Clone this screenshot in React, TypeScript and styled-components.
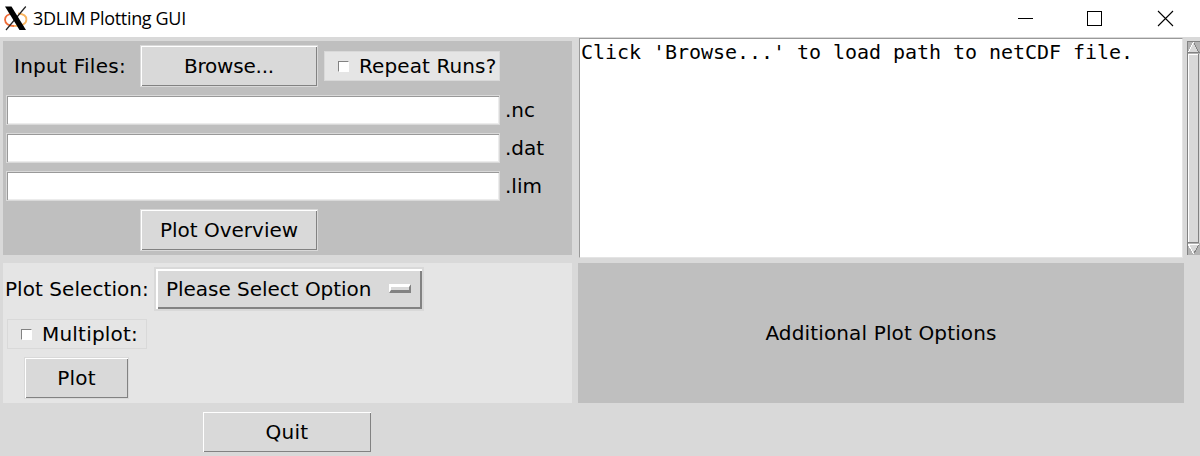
import React from "react";
import styled, { createGlobalStyle } from "styled-components";

const FACE = "#d9d9d9";
const DARK = "#828282";
const PANEL = "#bfbfbf";
const LIGHT = "#e5e5e5";

const GlobalStyle = createGlobalStyle`
  * { box-sizing: border-box; }
  body {
    margin: 0;
    background: ${FACE};
    color: #000;
    font: 20px/24px "DejaVu Sans", sans-serif;
    overflow: hidden;
  }
`;

const Window = styled.div`
  width: 1200px;
  height: 456px;
  display: flex;
  flex-direction: column;
  background: ${FACE};
  white-space: nowrap;
`;

const TitleBar = styled.header`
  height: 37px;
  flex: none;
  display: flex;
  align-items: center;
  background: #fff;
  padding-left: 4px;
`;

const Title = styled.h1`
  margin: 0 auto 0 5px;
  padding-bottom: 1px;
  font: 400 18px/24px "Open Sans", "Noto Sans", sans-serif;
  letter-spacing: -0.34px;
`;

const Controls = styled.div`
  display: flex;
  svg { display: block; }
`;

const Content = styled.main`
  flex: 1;
  display: flex;
`;

const LeftColumn = styled.div`
  width: 569px;
  margin: 4px 6px 0 3px;
  display: flex;
  flex-direction: column;
`;

const RightColumn = styled.div`
  width: 606px;
  padding-top: 1px;
`;

const InputPanel = styled.section`
  height: 214px;
  background: ${PANEL};
  padding: 4px 3px;
  display: flex;
  flex-direction: column;
`;

const Row = styled.div<{ $indent?: number; $top?: number }>`
  display: flex;
  align-items: center;
  padding-left: ${(p) => p.$indent ?? 0}px;
  margin-top: ${(p) => p.$top ?? 0}px;
`;

const Label = styled.span<{ $width?: number; $spacing?: number }>`
  width: ${(p) => (p.$width ? `${p.$width}px` : "auto")};
  letter-spacing: ${(p) => p.$spacing ?? 0}px;
`;

const Button = styled.button<{ $width: number; $spacing?: number }>`
  width: ${(p) => p.$width}px;
  height: 42px;
  flex: none;
  padding: 0;
  font: inherit;
  letter-spacing: ${(p) => p.$spacing ?? 0}px;
  color: inherit;
  background: ${FACE};
  border: 1px solid ${FACE};
  box-shadow: inset 1px 1px 0 #fff, inset -1px -1px 0 ${DARK};
`;

const CheckLabel = styled.label<{ $width: number; $spacing: number }>`
  width: ${(p) => p.$width}px;
  height: 30px;
  display: flex;
  align-items: center;
  gap: 10px;
  padding-left: 13px;
  letter-spacing: ${(p) => p.$spacing}px;
  background: ${LIGHT};
  border: 1px solid ${FACE};
`;

const CheckBox = styled.input.attrs({ type: "checkbox" })`
  appearance: none;
  width: 11px;
  height: 11px;
  margin: 0;
  background: #fff;
  border: 1px solid;
  border-color: ${DARK} #fff #fff ${DARK};
`;

const FileRow = styled.div`
  display: flex;
  align-items: center;
  gap: 5px;
  margin-top: 8px;
`;

const Entry = styled.input`
  width: 494px;
  height: 30px;
  padding: 0 2px;
  font: inherit;
  background: #fff;
  border: 1px solid ${FACE};
  outline: none;
  box-shadow: inset 1px 1px 0 #999, inset -1px -1px 0 #ececec;
`;

const PlotPanel = styled.section`
  height: 140px;
  margin-top: 8px;
  padding: 4px 0 0 2px;
  background: ${LIGHT};
`;

const OptionMenu = styled.button`
  width: 270px;
  height: 44px;
  display: flex;
  align-items: center;
  justify-content: space-between;
  padding: 0 11px 0 10px;
  font: inherit;
  letter-spacing: -0.03px;
  color: inherit;
  background: ${FACE};
  border: 2px solid ${FACE};
  box-shadow: inset 2px 2px 0 #fff, inset -2px -2px 0 ${DARK};
`;

const Indicator = styled.span`
  width: 22px;
  height: 9px;
  margin-bottom: 1px;
  background: ${FACE};
  border: 3px solid;
  border-width: 3px 2px 3px 2px;
  border-color: #fff ${DARK} ${DARK} #fff;
`;

const Output = styled.div`
  width: 604px;
  height: 220px;
  margin-left: 1px;
  padding: 1px 1px;
  background: #fff;
  border: 1px solid;
  border-color: #999 #e4e4e4 #e4e4e4 #999;
  font-family: "DejaVu Sans Mono", monospace;
  letter-spacing: -0.04px;
`;

const OptionsPanel = styled.section`
  height: 140px;
  margin-top: 5px;
  display: flex;
  align-items: center;
  justify-content: center;
  letter-spacing: 0.14px;
  background: ${PANEL};
`;

const ScrollBar = styled.div`
  width: 13px;
  height: 214px;
  margin: 4px 0 0 3px;
  svg { display: block; }
`;

const XLogo = () => (
  <svg width="24" height="25" viewBox="0 0 24 25">
    <path d="M9 7.6C4 8 1 10.400 1 13.800S4.500 20 10 20" fill="none" stroke="#ef6c37" strokeWidth="1.800" />
    <path d="M14 7.500C19 7.800 22.400 9.700 22.400 13.500S18.500 20 10 20" fill="none" stroke="#f9b560" strokeWidth="1.800" />
    <path d="M21.800 0.500L2 24" stroke="#222" strokeWidth="1.200" />
    <path d="M1 0.500H7.500L22 24H15.500Z" fill="#000" />
  </svg>
);

const WindowControls = () => (
  <svg width="200" height="37" viewBox="1000 0 200 37" fill="none" stroke="#000" shapeRendering="crispEdges">
    <path d="M1018 18.5H1033" />
    <rect x="1087.5" y="11.5" width="14" height="14" />
    <path d="M1158 11L1173 26M1173 11L1158 26" shapeRendering="auto" strokeWidth="1.1" />
  </svg>
);

const ScrollParts = () => (
  <svg width="13" height="214" viewBox="0 0 13 214" shapeRendering="crispEdges">
    <rect width="13" height="214" fill="#b3b3b3" />
    <path d="M0 0H13V1H1V214H0Z" fill={DARK} />
    <path d="M6.5 1L12 12H1Z" fill={FACE} />
    <path d="M1 11.5H12L6.5 1" fill="none" stroke={DARK} />
    <path d="M6.5 1L1.5 11" stroke="#fff" />
    <rect x="1" y="13" width="12" height="189" fill={FACE} />
    <path d="M1 13H12V14H2V201H1Z" fill="#fff" />
    <path d="M11 13H12V202H1V201H11Z" fill={DARK} />
    <path d="M1 203H12L6.5 213Z" fill={FACE} />
    <path d="M12 203.5L6.5 213" stroke={DARK} />
    <path d="M12 203.5H1.5L6.5 213" fill="none" stroke="#fff" />
  </svg>
);

export default function App() {
  return (
    <>
      <GlobalStyle />
      <Window>
        <TitleBar>
          <XLogo />
          <Title>3DLIM Plotting GUI</Title>
          <Controls><WindowControls /></Controls>
        </TitleBar>
        <Content>
          <LeftColumn>
            <InputPanel>
              <Row $indent={8}>
                <Label $width={126} $spacing={0.26}>Input Files:</Label>
                <Button $width={178} $spacing={-0.2}>Browse...</Button>
                <Row $indent={6}>
                  <CheckLabel $width={176} $spacing={0.1}>
                    <CheckBox />
                    Repeat Runs?
                  </CheckLabel>
                </Row>
              </Row>
              {[".nc", ".dat", ".lim"].map((ext) => (
                <FileRow key={ext}>
                  <Entry aria-label={ext} />
                  <Label>{ext}</Label>
                </FileRow>
              ))}
              <Row $indent={134} $top={8}>
                <Button $width={178}>Plot Overview</Button>
              </Row>
            </InputPanel>
            <PlotPanel>
              <Row>
                <Label $width={149} $spacing={0.06}>Plot Selection:</Label>
                <OptionMenu>
                  Please Select Option
                  <Indicator />
                </OptionMenu>
              </Row>
              <Row $indent={2} $top={8}>
                <CheckLabel $width={140} $spacing={0.2}>
                  <CheckBox />
                  Multiplot:
                </CheckLabel>
              </Row>
              <Row $indent={19} $top={8}>
                <Button $width={105} $spacing={0.15}>Plot</Button>
              </Row>
            </PlotPanel>
            <Row $indent={199} $top={8}>
              <Button $width={170} $spacing={0.25}>Quit</Button>
            </Row>
          </LeftColumn>
          <RightColumn>
            <Output>Click 'Browse...' to load path to netCDF file.</Output>
            <OptionsPanel>Additional Plot Options</OptionsPanel>
          </RightColumn>
          <ScrollBar><ScrollParts /></ScrollBar>
        </Content>
      </Window>
    </>
  );
}
